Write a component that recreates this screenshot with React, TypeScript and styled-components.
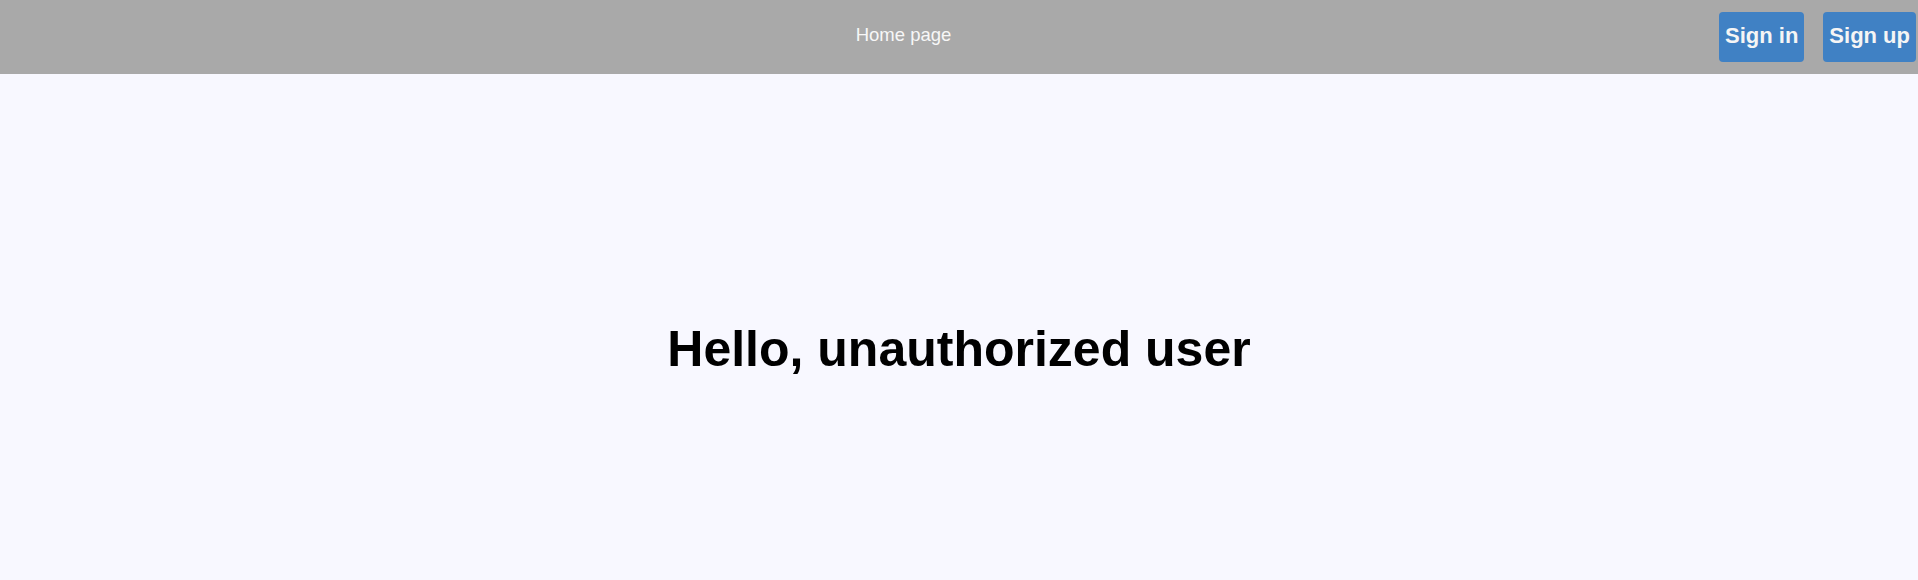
import React from "react";
import styled, { createGlobalStyle } from "styled-components";

const Global = createGlobalStyle`
  html, body { margin: 0; padding: 0; }
  body {
    background: #f8f8ff;
    font-family: "Liberation Sans", Arial, sans-serif;
  }
`;

const Page = styled.div`
  display: flex;
  flex-direction: column;
  height: 580px;
  background: #f8f8ff;
`;

const Header = styled.header`
  display: flex;
  align-items: center;
  height: 74px;
  background: #a9a9a9;
  padding-right: 2px;
`;

const Nav = styled.nav`
  flex: 1;
  display: flex;
  justify-content: center;
  padding-left: 88px;
  padding-bottom: 4px;
`;

const NavLink = styled.a`
  color: #f7f7f7;
  font-size: 18.5px;
  text-decoration: none;
`;

const Actions = styled.div`
  display: flex;
  gap: 19px;
`;

const Button = styled.button`
  height: 50px;
  padding: 0 6px 3px;
  border: none;
  border-radius: 4px;
  background: #4081c4;
  color: #f5f5f5;
  font-family: "Liberation Sans", Arial, sans-serif;
  font-weight: bold;
  font-size: 22px;
  cursor: pointer;
`;

const Main = styled.main`
  flex: 1;
  display: flex;
  align-items: center;
  justify-content: center;
  padding-top: 44px;
`;

const Title = styled.h1`
  margin: 0;
  font-family: "Liberation Sans", Arial, sans-serif;
  font-weight: bold;
  font-size: 50px;
  color: #000;
  white-space: nowrap;
`;

export default function App() {
  return (
    <>
      <Global />
      <Page>
        <Header>
          <Nav>
            <NavLink href="#">Home page</NavLink>
          </Nav>
          <Actions>
            <Button>Sign in</Button>
            <Button>Sign up</Button>
          </Actions>
        </Header>
        <Main>
          <Title>Hello, unauthorized user</Title>
        </Main>
      </Page>
    </>
  );
}
